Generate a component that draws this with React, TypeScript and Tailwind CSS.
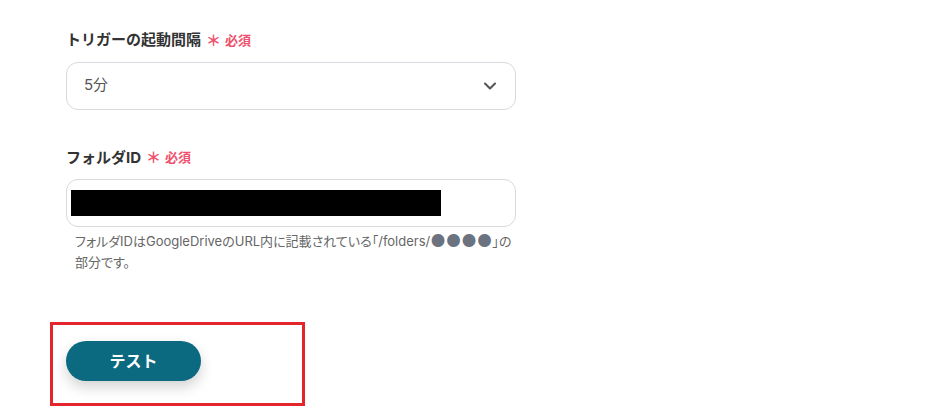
import React from 'react';
import { ChevronDown } from 'lucide-react';

const Required = () => (
  <span className="ml-[5px] inline-flex items-center text-[13px] font-bold text-[#f0506e]">
    <span className="mr-[4px] text-[15px] leading-none">＊</span>必須
  </span>
);

export default function App() {
  return (
    <div
      className="h-[414px] w-[934px] overflow-hidden bg-white"
      style={{ fontFamily: '"Inter", "Noto Sans CJK JP", sans-serif' }}
    >
      <div className="pl-[66px] pt-[29px]">
        <div className="w-[450px]">
          <div className="flex items-center text-[15px] font-bold text-[#333]">
            トリガーの起動間隔
            <Required />
          </div>
          <div className="mt-[10px] flex h-[48px] items-center justify-between rounded-[12px] border border-[#d6d9de] pl-[17px] pr-[15px]">
            <span className="text-[15px] text-[#555]">5分</span>
            <ChevronDown className="h-5 w-5 text-[#555]" strokeWidth={2.5} />
          </div>

          <div className="mt-[37px] flex items-center text-[15px] font-bold text-[#333]">
            フォルダID
            <Required />
          </div>
          <div className="mt-[10px] flex h-[48px] items-center rounded-[12px] border border-[#d6d9de] pl-[4px]">
            <div className="h-[26px] w-[370px] bg-black" />
          </div>
          <p className="mt-[4px] pl-[9px] pr-[4px] text-[13px] leading-[21px] text-[#666] [font-feature-settings:'palt']">
            フォルダIDはGoogleDriveのURL内に記載されている「/folders/
            <span className="inline-block align-[-1px] text-[17px] leading-[17px] text-[#6b7280] [font-feature-settings:normal]">●●●●</span>
            」の部分です。
          </p>
        </div>
      </div>

      <div className="ml-[50px] mt-[49px] h-[84px] w-[255px] border-[3px] border-[#e3262b] pl-[13px] pt-[16px]">
        <button className="h-[40px] w-[135px] rounded-full bg-[#0b6a80] text-[16px] font-bold text-white shadow-[0_6px_14px_rgba(0,0,0,0.18)]">
          テスト
        </button>
      </div>
    </div>
  );
}
